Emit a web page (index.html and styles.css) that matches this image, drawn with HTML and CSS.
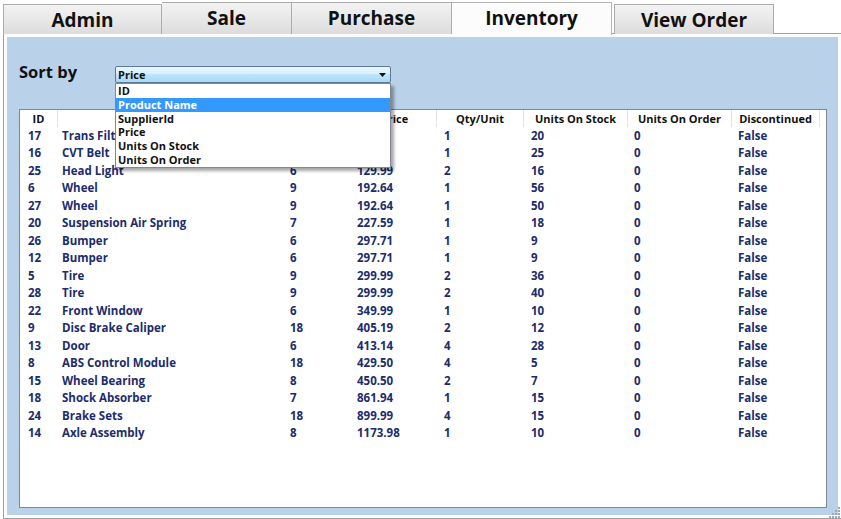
FILE: index.html
```html
<!DOCTYPE html>
<html>
<head>
<meta charset="utf-8">
<link rel="stylesheet" href="styles.css">
</head>
<body>
<div class="tabs">
  <div class="tab tab-admin">Admin</div>
  <div class="tab tab-sale">Sale</div>
  <div class="tab tab-purchase">Purchase</div>
  <div class="tab tab-inv selected">Inventory</div>
  <div class="tab tab-view">View Order</div>
</div>
<div class="panel">
  <div class="content">
    <div class="sortrow">
      <div class="sortlabel">Sort by</div>
      <div class="combo">
        <span class="combo-text">Price</span>
        <svg class="arrow" width="7" height="4" viewBox="0 0 7 4"><path d="M0 0H7L3.5 4Z" fill="#111"/></svg>
        <div class="dropdown">
          <div class="opt">ID</div>
          <div class="opt active">Product Name</div>
          <div class="opt">SupplierId</div>
          <div class="opt">Price</div>
          <div class="opt">Units On Stock</div>
          <div class="opt">Units On Order</div>
        </div>
      </div>
    </div>
    <div class="grid">
      <div class="row head">
        <div class="h">ID</div><div class="h">Product Name</div><div class="h">SupplierId</div><div class="h">Price</div><div class="h">Qty/Unit</div><div class="h">Units On Stock</div><div class="h">Units On Order</div><div class="h">Discontinued</div>
      </div>
      <div class="body" id="body"></div>
    </div>
  </div>
  <svg class="grip" width="12" height="12" viewBox="0 0 12 12">
    <g fill="#9aa8b8">
      <rect x="9" y="1" width="2" height="2"/>
      <rect x="6" y="4" width="2" height="2"/><rect x="9" y="4" width="2" height="2"/>
      <rect x="3" y="7" width="2" height="2"/><rect x="6" y="7" width="2" height="2"/><rect x="9" y="7" width="2" height="2"/>
      <rect x="0" y="10" width="2" height="2"/><rect x="3" y="10" width="2" height="2"/><rect x="6" y="10" width="2" height="2"/><rect x="9" y="10" width="2" height="2"/>
    </g>
  </svg>
</div>
<script>
var data = [
 ["17","Trans Filter","8","89.99","1","20","0","False"],
 ["16","CVT Belt","7","99.99","1","25","0","False"],
 ["25","Head Light","6","129.99","2","16","0","False"],
 ["6","Wheel","9","192.64","1","56","0","False"],
 ["27","Wheel","9","192.64","1","50","0","False"],
 ["20","Suspension Air Spring","7","227.59","1","18","0","False"],
 ["26","Bumper","6","297.71","1","9","0","False"],
 ["12","Bumper","6","297.71","1","9","0","False"],
 ["5","Tire","9","299.99","2","36","0","False"],
 ["28","Tire","9","299.99","2","40","0","False"],
 ["22","Front Window","6","349.99","1","10","0","False"],
 ["9","Disc Brake Caliper","18","405.19","2","12","0","False"],
 ["13","Door","6","413.14","4","28","0","False"],
 ["8","ABS Control Module","18","429.50","4","5","0","False"],
 ["15","Wheel Bearing","8","450.50","2","7","0","False"],
 ["18","Shock Absorber","7","861.94","1","15","0","False"],
 ["24","Brake Sets","18","899.99","4","15","0","False"],
 ["14","Axle Assembly","8","1173.98","1","10","0","False"]
];
var b = document.getElementById("body");
data.forEach(function(r){
  var row = document.createElement("div");
  row.className = "row data";
  r.forEach(function(v,i){
    var c = document.createElement("div");
    c.className = "c c" + i;
    c.textContent = v;
    row.appendChild(c);
  });
  b.appendChild(row);
});
</script>
</body>
</html>
```
FILE: styles.css
```css
* { box-sizing: border-box; }
html, body { margin: 0; padding: 0; background: #ffffff; }
body {
  width: 841px;
  height: 519px;
  overflow: hidden;
  font-family: "Open Sans", "DejaVu Sans", sans-serif;
  color: #111;
}
.tabs {
  display: flex;
  align-items: flex-end;
  height: 34px;
  padding-left: 3px;
  position: relative;
  z-index: 2;
}
.tab {
  height: 31px;
  border: 1px solid #acacac;
  border-bottom: none;
  background: linear-gradient(#f3f3f3, #e8e8e8 50%, #dcdcdc);
  font-size: 19px;
  font-weight: 700;
  text-align: center;
  line-height: 30px;
  color: #111;
}
.tab-admin { width: 159px; height: 30px; line-height: 28px; padding-top: 1px; }
.tab-sale { width: 130px; height: 32px; border-left: none; }
.tab-purchase { width: 160px; height: 32px; border-left: none; }
.tab-inv { width: 160px; height: 32px; border-left: none; }
.tab-view { width: 160px; height: 30px; margin-left: 2px; line-height: 28px; padding-top: 1px; }
.tab.selected {
  background: #fcfcfc;
  height: 33px;
  margin-bottom: -1px;
  line-height: 31px;
  border-color: #b4b4b4;
}
.panel {
  position: relative;
  margin-top: -1px;
  margin-left: 3px;
  width: 839px;
  height: 486px;
  border: 1px solid #a0a0a0;
  background: #fcfcfc;
  padding: 3px;
}
.content {
  height: 100%;
  background: #bad1ea;
  padding: 29px 11px 7px 12px;
  display: flex;
  flex-direction: column;
}
.sortrow {
  display: flex;
  align-items: center;
  height: 17px;
  position: relative;
  z-index: 5;
}
.sortlabel {
  width: 96px;
  font-size: 16.5px;
  font-weight: 700;
  color: #111;
  margin-top: -6px;
}
.combo {
  position: relative;
  width: 276px;
  height: 17px;
  border: 1px solid #5c7a98;
  border-radius: 2px;
  background: linear-gradient(#eaf6fd, #d9f0fc 45%, #bee6fd 50%, #a7d9f5);
  display: flex;
  align-items: center;
  padding-left: 2px;
}
.combo-text {
  font-size: 11px;
  font-weight: 700;
  color: #111;
  flex: 1;
}
.arrow { margin-right: 4px; }
.dropdown {
  position: absolute;
  top: 16px;
  left: -1px;
  width: 276px;
  height: 85px;
  background: #fff;
  border: 1px solid #828790;
  box-shadow: 3px 3px 3px rgba(0,0,0,0.35);
}
.opt {
  height: 13.8px;
  line-height: 13.8px;
  font-size: 11px;
  font-weight: 700;
  padding-left: 2px;
  color: #111;
}
.opt.active { background: #3399ff; color: #fff; }
.grid {
  flex: 1;
  margin-top: 26px;
  background: #fff;
  border: 1px solid #828790;
  position: relative;
  z-index: 1;
}
.row {
  display: grid;
  grid-template-columns: 38px 228px 67px 84px 87px 104px 104px 88px;
}
.row.head { height: 17px; }
.h {
  font-size: 11px;
  font-weight: 700;
  text-align: center;
  line-height: 17px;
  border-right: 1px solid #e3e3e3;
  color: #111;
  white-space: nowrap;
}
.row.data { height: 17.47px; }
.c {
  font-size: 11.5px;
  font-weight: 700;
  line-height: 17.47px;
  color: #1c2c6c;
  white-space: nowrap;
}
.c0 { padding-left: 8px; }
.c1 { padding-left: 4px; }
.c2 { padding-left: 4px; }
.c3 { padding-left: 4px; }
.c4 { padding-left: 7px; }
.c5 { padding-left: 7px; }
.c6 { padding-left: 6px; }
.c7 { padding-left: 6px; }
.grip {
  position: absolute;
  right: 0px;
  bottom: 0px;
}
```
